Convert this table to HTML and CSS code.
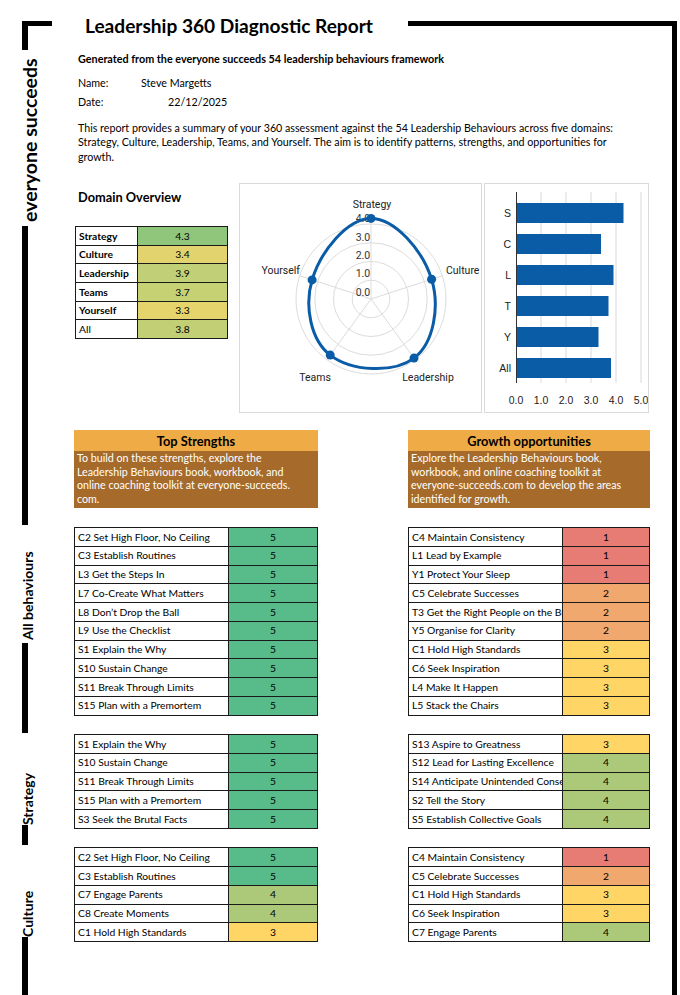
FILE: index.html
```html
<!DOCTYPE html>
<html lang="en">
<head>
<meta charset="utf-8">
<title>Leadership 360 Diagnostic Report</title>
<link rel="stylesheet" href="styles.css">
</head>
<body>
<div class="page">
  <aside class="side">
    <div class="corner"></div>
    <div class="label l1"><span>everyone succeeds</span></div>
    <div class="bar b1"></div>
    <div class="label l2"><span>All behaviours</span></div>
    <div class="bar b2"></div>
    <div class="label l3"><span>Strategy</span></div>
    <div class="bar b3"></div>
    <div class="label l4"><span>Culture</span></div>
    <div class="bar b4"></div>
  </aside>

  <main class="main">
    <header class="titlebar">
      <h1>Leadership 360 Diagnostic Report</h1>
      <div class="topline"></div>
    </header>

    <p class="subtitle">Generated from the everyone succeeds 54 leadership behaviours framework</p>

    <div class="meta">
      <div class="meta-row"><span class="k k-name">Name:</span><span>Steve Margetts</span></div>
      <div class="meta-row"><span class="k k-date">Date:</span><span>22/12/2025</span></div>
    </div>

    <p class="intro">This report provides a summary of your 360 assessment against the 54 Leadership Behaviours across five domains:<br>Strategy, Culture, Leadership, Teams, and Yourself. The aim is to identify patterns, strengths, and opportunities for<br>growth.</p>

    <section class="overview">
      <div class="domain">
        <h2>Domain Overview</h2>
        <table class="dtable">
          <tr><th>Strategy</th><td class="d43">4.3</td></tr>
          <tr><th>Culture</th><td class="d34">3.4</td></tr>
          <tr><th>Leadership</th><td class="d39">3.9</td></tr>
          <tr><th>Teams</th><td class="d37">3.7</td></tr>
          <tr><th>Yourself</th><td class="d33">3.3</td></tr>
          <tr><th class="plain">All</th><td class="d38">3.8</td></tr>
        </table>
      </div>

      <div class="chart radar">
        <svg width="241" height="228" viewBox="0 0 241 228">
          <g transform="translate(-1,-1)">
            <g class="grid">
              <circle cx="132" cy="116" r="18.75"/>
              <circle cx="132" cy="116" r="37.5"/>
              <circle cx="132" cy="116" r="56.25"/>
              <circle cx="132" cy="116" r="75"/>
              <line x1="132" y1="116" x2="132" y2="41"/>
              <line x1="132" y1="116" x2="203.3" y2="92.8"/>
              <line x1="132" y1="116" x2="176.1" y2="176.7"/>
              <line x1="132" y1="116" x2="87.9" y2="176.7"/>
              <line x1="132" y1="116" x2="60.7" y2="92.8"/>
            </g>
            <g class="ticks">
              <text x="124" y="39">4.0</text>
              <text x="124" y="58">3.0</text>
              <text x="124" y="76">2.0</text>
              <text x="124" y="94">1.0</text>
              <text x="124" y="113">0.0</text>
            </g>
            <path class="series" d="M132,35.4 C156,35.3 183.7,67.5 192.6,96.3 C200.9,123.4 194.9,160.2 175,175.1 C154.3,190.6 112.4,188.4 91.2,172.1 C71.6,157.1 65.3,122.9 73.1,96.9 C81.7,68.2 108.2,35.5 132,35.4 Z"/>
            <g class="pts">
              <circle cx="132" cy="35.4" r="4.5"/>
              <circle cx="192.6" cy="96.3" r="4.5"/>
              <circle cx="175" cy="175.1" r="4.5"/>
              <circle cx="91.2" cy="172.1" r="4.5"/>
              <circle cx="73.1" cy="96.9" r="4.5"/>
            </g>
            <g class="axis-labels">
              <text x="133" y="25" text-anchor="middle">Strategy</text>
              <text x="207" y="91">Culture</text>
              <text x="189" y="198" text-anchor="middle">Leadership</text>
              <text x="76" y="198" text-anchor="middle">Teams</text>
              <text x="61" y="91" text-anchor="end">Yourself</text>
            </g>
          </g>
        </svg>
      </div>

      <div class="chart bars">
        <svg width="163" height="228" viewBox="0 0 163 228">
          <g transform="translate(-1,-1)">
            <g class="vgrid">
              <line x1="57" y1="9" x2="57" y2="200"/>
              <line x1="82" y1="9" x2="82" y2="200"/>
              <line x1="107" y1="9" x2="107" y2="200"/>
              <line x1="132" y1="9" x2="132" y2="200"/>
              <line x1="157" y1="9" x2="157" y2="200"/>
            </g>
            <g class="hbars">
              <rect x="32" y="20" width="107.5" height="20"/>
              <rect x="32" y="51" width="85" height="20"/>
              <rect x="32" y="82" width="97.5" height="20"/>
              <rect x="32" y="113" width="92.5" height="20"/>
              <rect x="32" y="144" width="82.5" height="20"/>
              <rect x="32" y="175" width="95" height="20"/>
            </g>
            <line class="yaxis" x1="32.5" y1="9" x2="32.5" y2="200"/>
            <g class="cats">
              <text x="27" y="34">S</text>
              <text x="27" y="65">C</text>
              <text x="27" y="96">L</text>
              <text x="27" y="127">T</text>
              <text x="27" y="158">Y</text>
              <text x="27" y="189">All</text>
            </g>
            <g class="xticks">
              <text x="32" y="221">0.0</text>
              <text x="57" y="221">1.0</text>
              <text x="82" y="221">2.0</text>
              <text x="107" y="221">3.0</text>
              <text x="132" y="221">4.0</text>
              <text x="157" y="221">5.0</text>
            </g>
          </g>
        </svg>
      </div>
    </section>

    <section class="lists">
      <div class="col">
        <div class="note">
          <h3>Top Strengths</h3>
          <p>To build on these strengths, explore the<br>Leadership Behaviours book, workbook, and<br>online coaching toolkit at everyone-succeeds.<br>com.</p>
        </div>
        <table class="btable">
          <tr><td>C2 Set High Floor, No Ceiling</td><td class="s5">5</td></tr>
          <tr><td>C3 Establish Routines</td><td class="s5">5</td></tr>
          <tr><td>L3 Get the Steps In</td><td class="s5">5</td></tr>
          <tr><td>L7 Co-Create What Matters</td><td class="s5">5</td></tr>
          <tr><td>L8 Don’t Drop the Ball</td><td class="s5">5</td></tr>
          <tr><td>L9 Use the Checklist</td><td class="s5">5</td></tr>
          <tr><td>S1 Explain the Why</td><td class="s5">5</td></tr>
          <tr><td>S10 Sustain Change</td><td class="s5">5</td></tr>
          <tr><td>S11 Break Through Limits</td><td class="s5">5</td></tr>
          <tr><td>S15 Plan with a Premortem</td><td class="s5">5</td></tr>
        </table>
        <table class="btable">
          <tr><td>S1 Explain the Why</td><td class="s5">5</td></tr>
          <tr><td>S10 Sustain Change</td><td class="s5">5</td></tr>
          <tr><td>S11 Break Through Limits</td><td class="s5">5</td></tr>
          <tr><td>S15 Plan with a Premortem</td><td class="s5">5</td></tr>
          <tr><td>S3 Seek the Brutal Facts</td><td class="s5">5</td></tr>
        </table>
        <table class="btable">
          <tr><td>C2 Set High Floor, No Ceiling</td><td class="s5">5</td></tr>
          <tr><td>C3 Establish Routines</td><td class="s5">5</td></tr>
          <tr><td>C7 Engage Parents</td><td class="s4">4</td></tr>
          <tr><td>C8 Create Moments</td><td class="s4">4</td></tr>
          <tr><td>C1 Hold High Standards</td><td class="s3">3</td></tr>
        </table>
      </div>

      <div class="col">
        <div class="note">
          <h3>Growth opportunities</h3>
          <p>Explore the Leadership Behaviours book,<br>workbook, and online coaching toolkit at<br>everyone-succeeds.com to develop the areas<br>identified for growth.</p>
        </div>
        <table class="btable right">
          <tr><td>C4 Maintain Consistency</td><td class="s1">1</td></tr>
          <tr><td>L1 Lead by Example</td><td class="s1">1</td></tr>
          <tr><td>Y1 Protect Your Sleep</td><td class="s1">1</td></tr>
          <tr><td>C5 Celebrate Successes</td><td class="s2">2</td></tr>
          <tr><td>T3 Get the Right People on the Bus</td><td class="s2">2</td></tr>
          <tr><td>Y5 Organise for Clarity</td><td class="s2">2</td></tr>
          <tr><td>C1 Hold High Standards</td><td class="s3">3</td></tr>
          <tr><td>C6 Seek Inspiration</td><td class="s3">3</td></tr>
          <tr><td>L4 Make It Happen</td><td class="s3">3</td></tr>
          <tr><td>L5 Stack the Chairs</td><td class="s3">3</td></tr>
        </table>
        <table class="btable right">
          <tr><td>S13 Aspire to Greatness</td><td class="s3">3</td></tr>
          <tr><td>S12 Lead for Lasting Excellence</td><td class="s4">4</td></tr>
          <tr><td>S14 Anticipate Unintended Consequences</td><td class="s4">4</td></tr>
          <tr><td>S2 Tell the Story</td><td class="s4">4</td></tr>
          <tr><td>S5 Establish Collective Goals</td><td class="s4">4</td></tr>
        </table>
        <table class="btable right">
          <tr><td>C4 Maintain Consistency</td><td class="s1">1</td></tr>
          <tr><td>C5 Celebrate Successes</td><td class="s2">2</td></tr>
          <tr><td>C1 Hold High Standards</td><td class="s3">3</td></tr>
          <tr><td>C6 Seek Inspiration</td><td class="s3">3</td></tr>
          <tr><td>C7 Engage Parents</td><td class="s4">4</td></tr>
        </table>
      </div>
    </section>
  </main>
</div>
</body>
</html>
```

FILE: styles.css
```css
* { box-sizing: border-box; margin: 0; padding: 0; }

html, body {
  width: 680px;
  height: 995px;
  overflow: hidden;
  background: #fff;
}

body {
  font-family: Lato, "Open Sans", sans-serif;
  font-size: 10.7px;
  color: #000;
}

.page {
  display: flex;
  height: 995px;
}

/* ---------- left sidebar ---------- */
.side {
  flex: none;
  width: 52px;
  margin-left: 22px;
  padding-top: 21px;
  display: flex;
  flex-direction: column;
  align-items: flex-start;
}

.corner {
  width: 30px;
  height: 29px;
  border-left: 6px solid #000;
  border-top: 5px solid #000;
}

.label {
  writing-mode: vertical-rl;
  transform: rotate(180deg);
  font-weight: 700;
  white-space: nowrap;
  line-height: 1;
  margin-left: -1px;
}

.l1 { height: 176px; font-size: 19.5px; padding-top: 4px; margin-left: -2px; }
.l2 { height: 118px; font-size: 14px; padding-top: 3px; }
.l3 { height: 92px; font-size: 14px; padding-top: 0; }
.l4 { height: 92px; font-size: 14px; padding-top: 0; }

.bar { width: 6px; background: #000; flex: none; }
.b1 { height: 299px; }
.b2 { height: 90px; }
.b3 { height: 20px; }
.b4 { flex: 1; }

/* ---------- main ---------- */
.main {
  flex: 1;
  margin-top: 21px;
  margin-right: 3px;
  border-right: 5px solid #000;
  padding-right: 22px;
}

.titlebar {
  display: flex;
  align-items: flex-start;
  margin-top: -6px;
  height: 22px;
}

h1 {
  font-size: 19.1px;
  line-height: 22px;
  font-weight: 700;
  margin-left: 11px;
  white-space: nowrap;
}

.topline {
  width: 269px;
  height: 5px;
  margin-top: 6px;
  margin-left: auto;
  margin-right: -27px;
  background: #000;
  flex: none;
}

.subtitle {
  font-weight: 700;
  font-size: 10.8px;
  line-height: 12px;
  margin: 16px 0 0 4px;
  white-space: nowrap;
}

.meta { margin: 7.5px 0 0 4px; }
.meta-row { display: flex; height: 19px; line-height: 19px; white-space: nowrap; }
.k-name { width: 63px; }
.k-date { width: 90px; }

.intro {
  margin: 10.25px 0 0 4px;
  line-height: 14.5px;
  white-space: nowrap;
}

/* ---------- overview ---------- */
.overview {
  display: grid;
  grid-template-columns: 163px 243px 165px;
  column-gap: 2px;
  height: 230px;
  margin-top: 18.75px;
}

.domain h2 {
  font-size: 12.8px;
  line-height: 16px;
  font-weight: 700;
  padding: 6px 0 0 4px;
}

.dtable {
  border-collapse: collapse;
  table-layout: fixed;
  margin: 21px 0 0 1px;
  width: 153px;
}

.dtable tr { height: 18.67px; }

.dtable th,
.dtable td {
  border: 1px solid #1a1a1a;
  padding: 0 3px;
  font-size: 10.3px;
  line-height: 1;
}

.dtable th {
  width: 62px;
  text-align: left;
  font-weight: 700;
  background: #fff;
}

.dtable th.plain { font-weight: 400; }
.dtable td { text-align: center; }

.d43 { background: #8fc67c; }
.d34 { background: #e3d36e; }
.d39 { background: #c1cf76; }
.d37 { background: #c6d174; }
.d33 { background: #e5d36c; }
.d38 { background: #c3cf75; }

.chart {
  border: 1px solid #d9d9d9;
  background: #fff;
}

.chart svg { display: block; }

.radar .grid circle,
.radar .grid line {
  fill: none;
  stroke: #dcdcdc;
  stroke-width: 1;
}

.radar .series {
  fill: none;
  stroke: #0a5ca6;
  stroke-width: 3;
}

.radar .pts circle { fill: #0a5ca6; }

.radar text {
  font-family: Roboto, "Liberation Sans", sans-serif;
  font-size: 10.5px;
  fill: #222;
}

.radar .ticks text {
  text-anchor: middle;
  fill: #333;
}

.bars .vgrid line { stroke: #d9d9d9; stroke-width: 1; }
.bars .yaxis { stroke: #333; stroke-width: 1; }
.bars .hbars rect { fill: #0a5ca6; }

.bars text {
  font-family: "Liberation Sans", Arial, sans-serif;
  font-size: 10.5px;
  fill: #222;
}

.bars .cats text { text-anchor: end; }
.bars .xticks text { text-anchor: middle; }

/* ---------- lists ---------- */
.lists {
  display: grid;
  grid-template-columns: 244px 242px;
  column-gap: 90px;
  margin-top: 17px;
}

.note h3 {
  background: #efab45;
  height: 21px;
  line-height: 22px;
  text-align: center;
  font-size: 12.8px;
  font-weight: 700;
}

.note p {
  background: #a66b2b;
  color: #fff;
  font-size: 10.7px;
  line-height: 13.5px;
  padding: 0 3px 3px;
  white-space: nowrap;
}

.btable {
  border-collapse: collapse;
  table-layout: fixed;
  width: 100%;
  margin-top: 18.5px;
}

.note + .btable { margin-top: 19px; }

.btable tr { height: 18.75px; }

.btable td {
  border: 1px solid #1a1a1a;
  font-size: 10.3px;
  line-height: 1;
  padding: 0 3px;
  white-space: nowrap;
  overflow: hidden;
  text-overflow: clip;
}

.btable td:first-child { width: 154px; background: #fff; }
.btable td:last-child { text-align: center; }

.s5 { background: #57bb8a; }
.s4 { background: #abc978; }
.s3 { background: #ffd666; }
.s2 { background: #f1a86e; }
.s1 { background: #e67c73; }
```
